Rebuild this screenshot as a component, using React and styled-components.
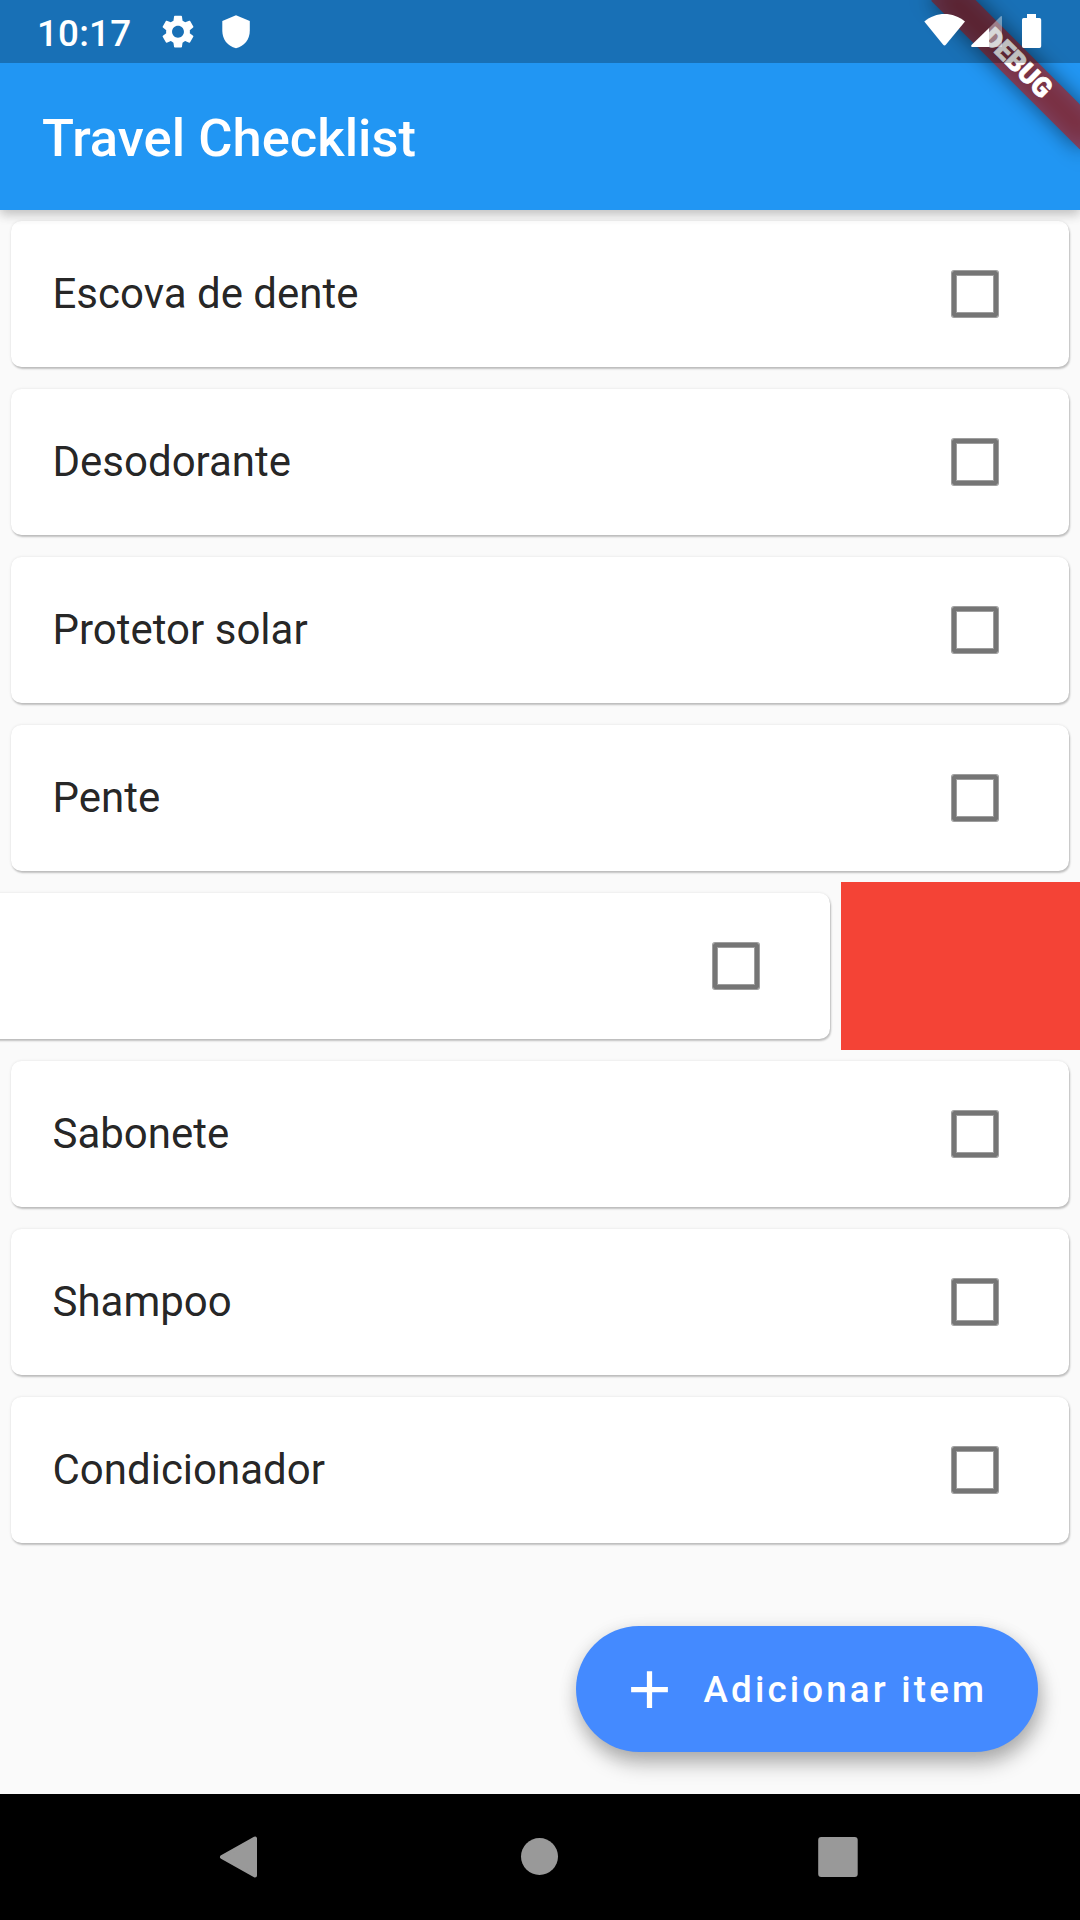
import React, { useState } from "react";
import styled, { createGlobalStyle } from "styled-components";

const GlobalStyle = createGlobalStyle`
  * { box-sizing: border-box; }
  body { margin: 0; background: #fafafa; font-family: Roboto, "Noto Sans", sans-serif; }
`;

const Screen = styled.div`
  position: relative;
  display: flex;
  flex-direction: column;
  width: 1080px;
  height: 1920px;
  overflow: hidden;
  background: #fafafa;
`;

const Header = styled.header`
  position: relative;
  z-index: 1;
  display: flex;
  flex-direction: column;
  height: 210px;
  background: #2196f3;
  box-shadow: 0 5px 10px rgba(0, 0, 0, 0.17), 0 1px 14px rgba(0, 0, 0, 0.1);
`;

const StatusBar = styled.div`
  position: relative;
  z-index: 3;
  display: flex;
  align-items: center;
  justify-content: space-between;
  height: 63px;
  padding: 0 38px 0 37px;
  background: rgba(0, 0, 0, 0.25);
`;

const StatusGroup = styled.div`
  display: flex;
  align-items: center;
  height: 63px;
`;

const Clock = styled.span`
  width: 121px;
  color: #fff;
  font-size: 36.75px;
  font-weight: 500;
  line-height: 43px;
  letter-spacing: 0.2px;
  padding-top: 3px;
`;

const StatusIcon = styled.svg`
  display: block;
  flex: none;
  height: 63px;
  width: ${(p) => p.$width}px;
  fill: #fff;
`;

const AppBar = styled.div`
  display: flex;
  align-items: center;
  height: 147px;
  padding: 2px 42px 0;
`;

const Title = styled.h1`
  margin: 0;
  color: #fff;
  font-size: 52.5px;
  font-weight: 500;
  line-height: 62px;
  letter-spacing: 0.03px;
`;

const BannerClip = styled.div`
  position: absolute;
  z-index: 2;
  inset: 0 0 auto auto;
  width: 210px;
  height: 210px;
  overflow: hidden;
  pointer-events: none;
`;

const Banner = styled.div`
  position: absolute;
  left: 105px;
  top: 73.5px;
  width: 210px;
  height: 31.5px;
  transform: rotate(45deg);
  transform-origin: 105px -73.5px;
  color: #fff;
  font-size: 26.775px;
  font-weight: 900;
  line-height: 31.5px;
  text-align: center;
  -webkit-text-stroke: 0.8px #fff;

  &::before,
  &::after {
    content: "";
    position: absolute;
    inset: 0;
    z-index: -1;
    background: rgba(183, 28, 28, 0.627);
  }
  &::before {
    background: rgba(0, 0, 0, 0.5);
    filter: blur(10.4px);
  }
`;

const List = styled.ul`
  flex: 1;
  margin: 0;
  padding: 0;
  list-style: none;
`;

const Row = styled.li`
  display: flex;
  height: 168px;
  margin-left: ${(p) => -p.$shift}px;
`;

const CardSlot = styled.div`
  flex: none;
  width: 1080px;
  padding: 11px;
`;

const Card = styled.label`
  display: flex;
  align-items: center;
  justify-content: space-between;
  height: 146px;
  padding: 0 71px 0 41.5px;
  border-radius: 10.5px;
  background: #fff;
  box-shadow: 1px 2px 2px rgba(0, 0, 0, 0.22), 0 0 3px rgba(0, 0, 0, 0.1);
`;

const Label = styled.span`
  margin-bottom: 1px;
  color: rgba(0, 0, 0, 0.87);
  font-size: 42px;
  line-height: 49px;
`;

const Checkbox = styled.input`
  appearance: none;
  width: 46px;
  height: 46px;
  margin: 0;
  border: 4px solid #757575;
  border-radius: 2px;
  box-shadow: 0 0 0 1px rgba(117, 117, 117, 0.7), inset 0 0 0 1px rgba(117, 117, 117, 0.7);
`;

const DismissBackground = styled.div`
  flex: none;
  width: ${(p) => p.$width}px;
  height: 168px;
  background: #f44336;
`;

const Fab = styled.button`
  position: absolute;
  right: 42px;
  bottom: 168px;
  display: flex;
  align-items: center;
  gap: 22.5px;
  width: 462px;
  height: 126px;
  padding: 0 0 0 42px;
  border: 0;
  border-radius: 63px;
  background: #448aff;
  color: #fff;
  font-family: inherit;
  font-size: 36.75px;
  font-weight: 500;
  letter-spacing: 3.15px;
  line-height: 43px;
  white-space: nowrap;
  box-shadow: 3px 12px 20px rgba(0, 0, 0, 0.27), 0 3px 18px rgba(0, 0, 0, 0.1);
`;

const PlusIcon = styled.svg`
  width: 63px;
  height: 63px;
  fill: currentColor;
`;

const NavBar = styled.nav`
  display: flex;
  align-items: center;
  justify-content: center;
  gap: 194px;
  height: 126px;
  padding-right: 2px;
  background: #000;
`;

const NavIcon = styled.svg`
  width: 105px;
  height: 126px;
  fill: #999;
  stroke: #999;
  stroke-linejoin: round;
`;

const SHIFT = 239;
const items = [
  { name: "Escova de dente" },
  { name: "Desodorante" },
  { name: "Protetor solar" },
  { name: "Pente" },
  { name: "", shift: SHIFT },
  { name: "Sabonete" },
  { name: "Shampoo" },
  { name: "Condicionador" },
];

function ChecklistRow({ name, shift = 0 }) {
  const [checked, setChecked] = useState(false);
  return (
    <Row $shift={shift}>
      <CardSlot>
        <Card>
          <Label>{name}</Label>
          <Checkbox type="checkbox" checked={checked} onChange={() => setChecked(!checked)} />
        </Card>
      </CardSlot>
      {shift > 0 && <DismissBackground $width={shift} />}
    </Row>
  );
}

export default function App() {
  return (
    <Screen>
      <GlobalStyle />
      <Header>
        <StatusBar>
          <StatusGroup>
            <Clock>10:17</Clock>
            <StatusIcon $width={110} viewBox="158 0 110 63">
              <path
                transform="translate(158.2 11.9) scale(1.65)"
                d="M19.14 12.94c.04-.3.06-.61.06-.94 0-.32-.02-.64-.07-.94l2.03-1.58c.18-.14.23-.41.12-.61l-1.92-3.32c-.12-.22-.37-.29-.59-.22l-2.39.96c-.5-.38-1.03-.7-1.62-.94l-.36-2.54c-.04-.24-.24-.41-.48-.41h-3.84c-.24 0-.43.17-.47.41l-.36 2.54c-.59.24-1.13.57-1.62.94l-2.39-.96c-.22-.08-.47 0-.59.22L2.74 8.87c-.12.21-.08.47.12.61l2.03 1.58c-.05.3-.09.63-.09.94s.02.64.07.94l-2.03 1.58c-.18.14-.23.41-.12.61l1.92 3.32c.12.22.37.29.59.22l2.39-.96c.5.38 1.03.7 1.62.94l.36 2.54c.05.24.24.41.48.41h3.84c.24 0 .44-.17.47-.41l.36-2.54c.59-.24 1.13-.56 1.62-.94l2.39.96c.22.08.47 0 .59-.22l1.92-3.32c.12-.22.07-.47-.12-.61l-2.01-1.58zM12 15.6c-1.98 0-3.6-1.62-3.6-3.6s1.62-3.6 3.6-3.6 3.6 1.62 3.6 3.6-1.62 3.6-3.6 3.6z"
              />
              <path d="M236 15.2 249.8 21V30.5C249.8 39.5 244.5 46 236 48.2 227.500 46 222.300 39.500 222.300 30.500V21Z" />
            </StatusIcon>
          </StatusGroup>
          <StatusGroup>
            <StatusIcon $width={122} viewBox="920 0 122 63">
              <path d="M924.300 21.500C936 11.500 953 11.500 965 21.500L946 44.500Q944.500 46.300 943 44.500Z" />
              <path d="M1002 17.500Q1002 15 1000 17L989 28V47H1002Z" fillOpacity="0.4" />
              <path d="M989 28V47H972Q970.300 46.500 971.500 45Z" />
              <path d="M1027 14H1036V18H1039.500Q1041.200 18 1041.200 19.700V46.300Q1041.200 48 1039.500 48H1023.700Q1022 48 1022 46.300V19.700Q1022 18 1023.700 18H1027Z" />
            </StatusIcon>
          </StatusGroup>
        </StatusBar>
        <AppBar>
          <Title>Travel Checklist</Title>
        </AppBar>
        <BannerClip>
          <Banner>DEBUG</Banner>
        </BannerClip>
      </Header>
      <List>
        {items.map((item, i) => (
          <ChecklistRow key={i} {...item} />
        ))}
      </List>
      <Fab>
        <PlusIcon viewBox="0 0 24 24">
          <path d="M19 13h-6v6h-2v-6H5v-2h6V5h2v6h6v2z" />
        </PlusIcon>
        Adicionar item
      </Fab>
      <NavBar>
        <NavIcon viewBox="188 1794 105 126">
          <path d="M222 1857 255 1838.500V1875.500Z" strokeWidth="4" />
        </NavIcon>
        <NavIcon viewBox="487 1794 105 126">
          <circle cx="539.500" cy="1856.500" r="18.500" stroke="none" />
        </NavIcon>
        <NavIcon viewBox="786 1794 105 126">
          <rect x="818.200" y="1837" width="39.500" height="40" rx="3" stroke="none" />
        </NavIcon>
      </NavBar>
    </Screen>
  );
}
